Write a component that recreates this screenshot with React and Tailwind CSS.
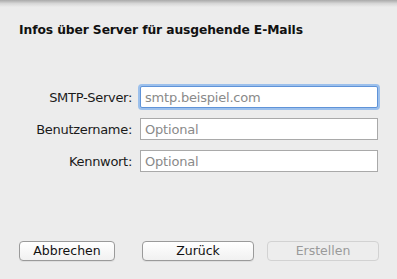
const FONT = { fontFamily: '"DejaVu Sans", "Liberation Sans", sans-serif' };

const FIELDS = [
  { label: 'SMTP-Server:', placeholder: 'smtp.beispiel.com', focused: true },
  { label: 'Benutzername:', placeholder: 'Optional' },
  { label: 'Kennwort:', placeholder: 'Optional' },
];

function Field({ label, placeholder, focused }) {
  return (
    <div className="flex items-center h-[22px]">
      <div className="w-[121px] text-right text-[13px] text-[#1a1a1a] pr-[8px] tracking-[-0.3px] whitespace-nowrap">{label}</div>
      <div
        className={`w-[238px] h-[22px] bg-white flex items-center px-[4px] text-[13px] tracking-[-0.2px] text-[#8a8a8a] ${
          focused
            ? 'border border-[#5f93d8] rounded-[2px] shadow-[0_0_0_2px_#9cc0ec]'
            : 'border border-[#a9a9a9]'
        }`}
      >
        {placeholder}
      </div>
    </div>
  );
}

function Button({ children, disabled, className }) {
  return (
    <button
      className={`h-[20px] rounded-[4px] border text-[12.5px] leading-none flex items-center justify-center ${className} ${
        disabled
          ? 'border-[#d2d2d2] bg-[#ededed] text-[#9a9a9a]'
          : 'border-[#9a9a9a] bg-gradient-to-b from-white to-[#f1f1f1] text-[#111] shadow-[0_1px_0_rgba(0,0,0,0.06)]'
      }`}
    >
      {children}
    </button>
  );
}

export default function App() {
  return (
    <div className="w-[397px] h-[279px] bg-[#ececec] flex flex-col overflow-hidden" style={FONT}>
      <div className="h-[7px] bg-gradient-to-b from-[#a9a9a9] via-[#d6d6d6] to-[#ececec] flex-shrink-0" />
      <div className="pl-[19px] pt-[14px] text-[12.3px] font-bold text-[#111] tracking-[-0.1px]">
        Infos über Server für ausgehende E-Mails
      </div>
      <div className="flex flex-col gap-[10px] pl-[19px] pt-[47px]">
        {FIELDS.map(f => <Field key={f.label} {...f} />)}
      </div>
      <div className="flex-1" />
      <div className="flex pl-[19px] pb-[18px]">
        <Button className="w-[96px]">Abbrechen</Button>
        <Button className="w-[112px] ml-[27px]">Zurück</Button>
        <Button className="w-[112px] ml-[13px]" disabled>Erstellen</Button>
      </div>
    </div>
  );
}
